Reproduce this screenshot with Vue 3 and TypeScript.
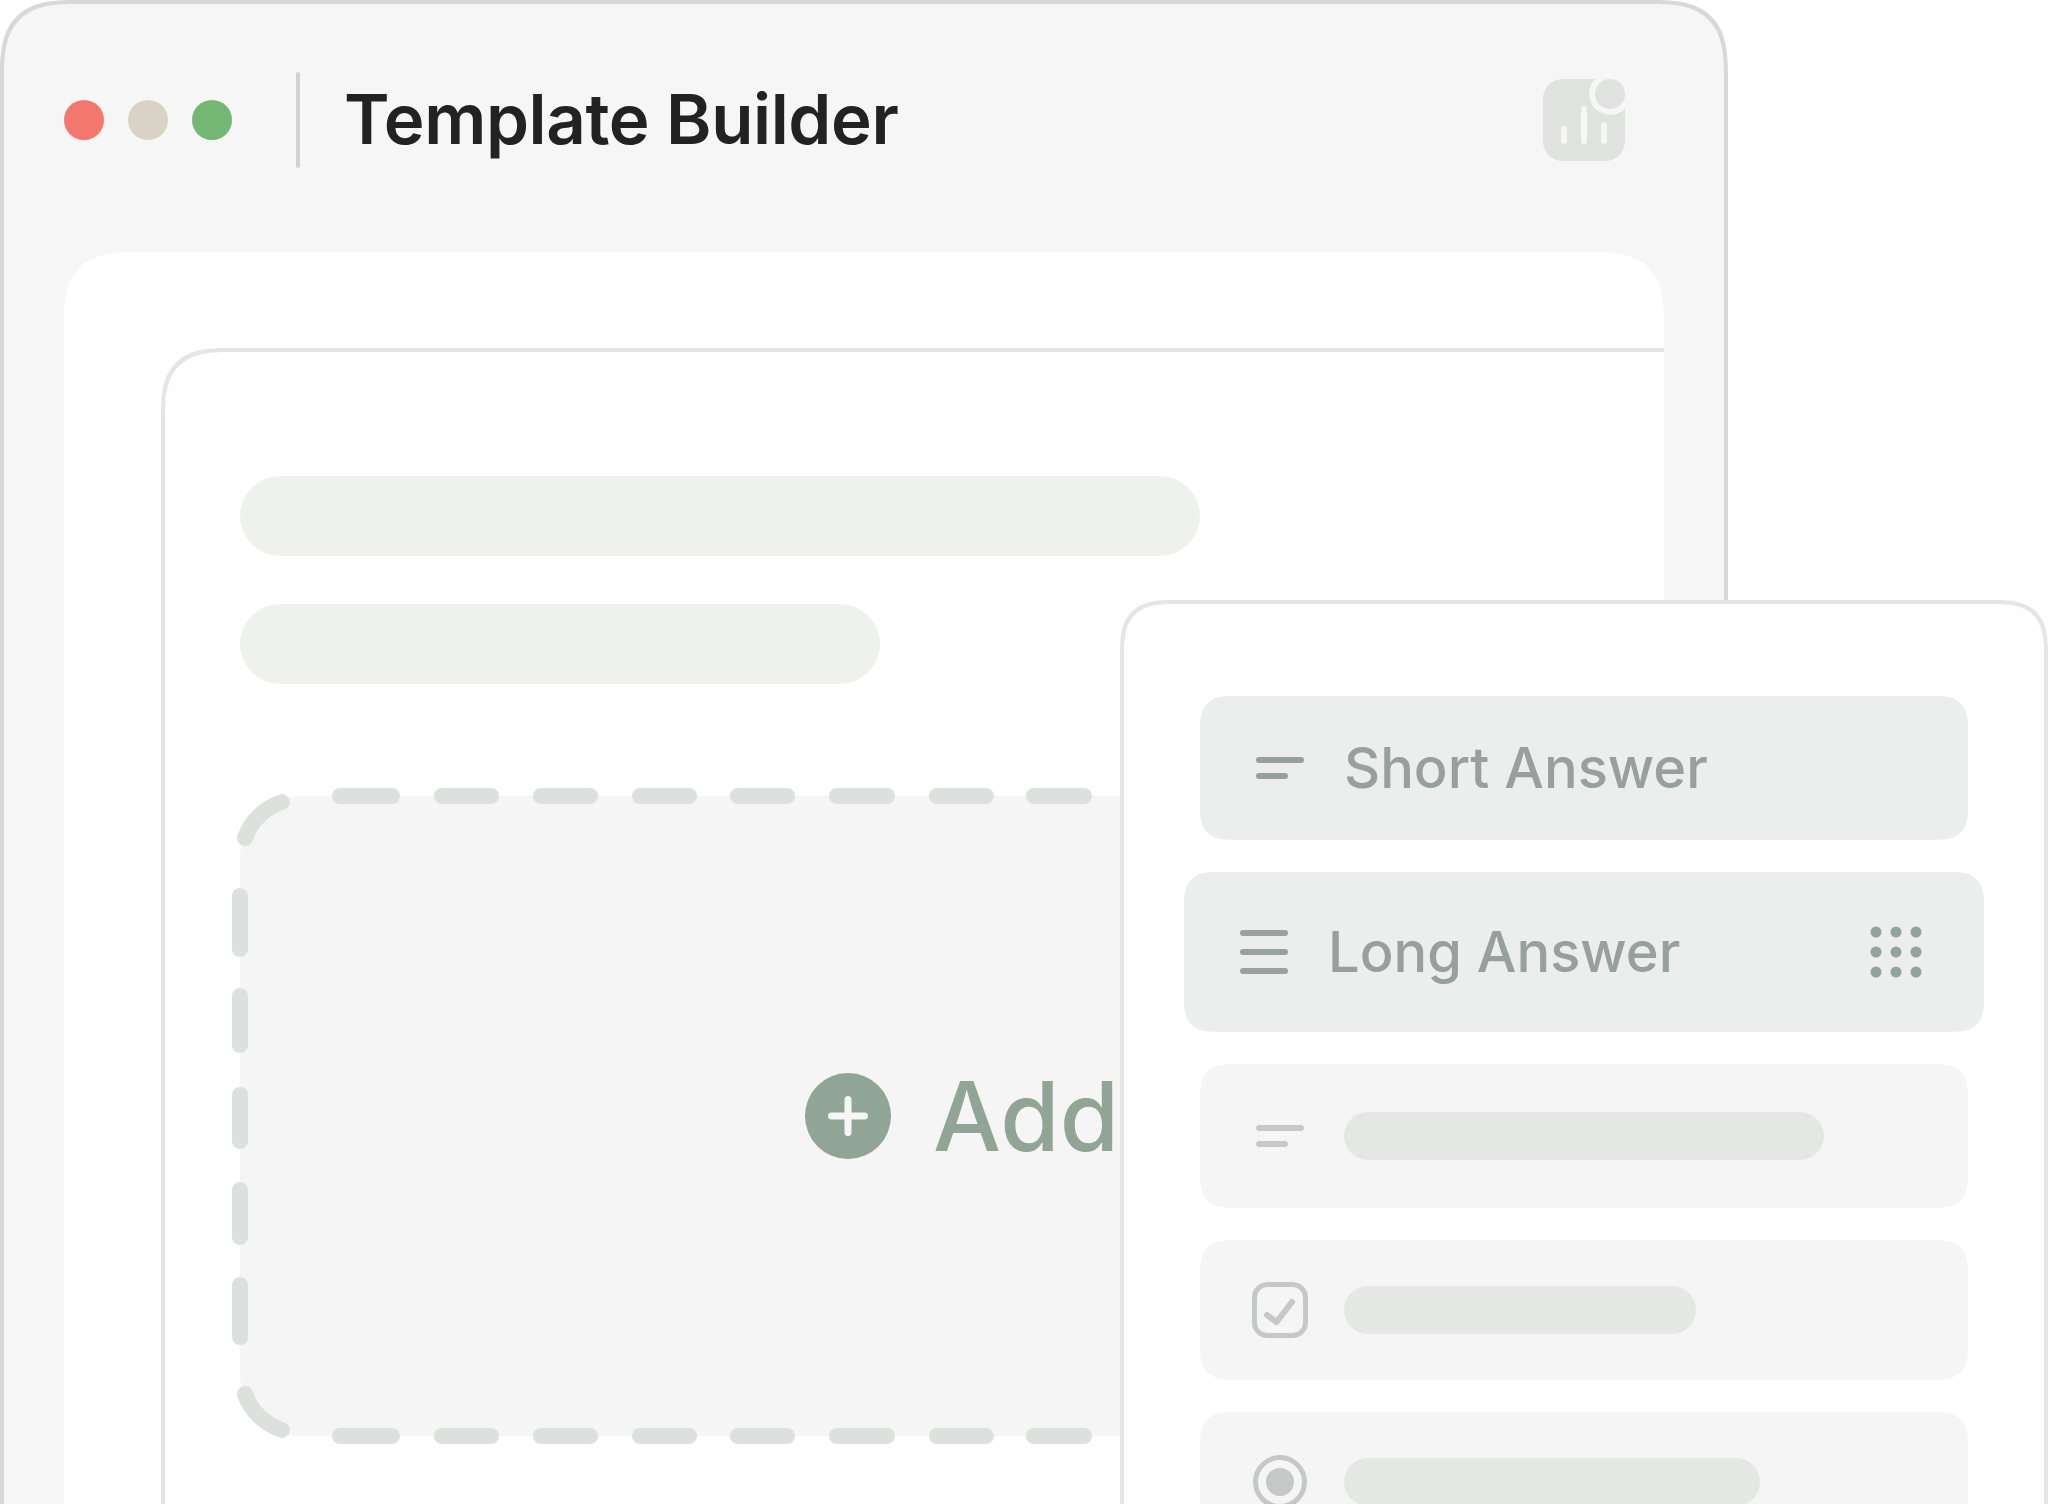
<script setup lang="ts">
const topDashes: [number, number][] = [[340,392],[442,491],[541,590],[640,689],[738,787],[837,887],[937,986],[1034,1084]]
const leftDashes: [number, number][] = [[896,949],[996,1045],[1095,1141],[1190,1237],[1285,1337]]
const ox = 240
const oy = 796
const h = 640
const dashPaths: string[] = [
  ...topDashes.map(([a, b]) => `M${a - ox} 0H${b - ox}`),
  ...topDashes.map(([a, b]) => `M${a - ox} ${h}H${b - ox}`),
  ...leftDashes.map(([a, b]) => `M0 ${a - oy}V${b - oy}`),
  'M5 42A58 58 0 0 1 42 6',
  `M5 ${h - 42}A58 58 0 0 0 42 ${h - 6}`,
]
const dots = [0, 1, 2].flatMap((r) => [0, 1, 2].map((c) => ({ cx: 6 + c * 20, cy: 6 + r * 20 })))
</script>

<template>
  <div class="stage">
    <section class="window">
      <header class="titlebar">
        <div class="lights">
          <span class="light red"></span>
          <span class="light sand"></span>
          <span class="light green"></span>
        </div>
        <span class="divider"></span>
        <h1 class="title">Template Builder</h1>
        <svg class="stats" width="82" height="82" viewBox="0 0 82 82">
          <path d="M20 0H52.3A21 21 0 0 0 82 29.7V62A20 20 0 0 1 62 82H20A20 20 0 0 1 0 62V20A20 20 0 0 1 20 0Z" fill="#e0e2df" />
          <circle cx="67" cy="15" r="15" fill="#e0e2df" />
          <rect x="18" y="47" width="6" height="18" rx="3" fill="#f6f6f6" />
          <rect x="38" y="27" width="6" height="38" rx="3" fill="#f6f6f6" />
          <rect x="58" y="43" width="6" height="22" rx="3" fill="#f6f6f6" />
        </svg>
      </header>
      <div class="sheet">
        <div class="card">
          <div class="bar wide"></div>
          <div class="bar narrow"></div>
          <div class="drop">
            <svg class="dashes" width="1440" height="640" viewBox="0 0 1440 640" fill="none">
              <path v-for="d in dashPaths" :key="d" :d="d" stroke="#dde1dd" stroke-width="16" stroke-linecap="round" />
            </svg>
            <span class="plus">
              <svg width="40" height="40" viewBox="0 0 40 40"><path d="M3.5 20H36.5M20 3.5V36.5" stroke="#f6f6f6" stroke-width="7" stroke-linecap="round" /></svg>
            </span>
            <span class="add">Add</span>
          </div>
        </div>
      </div>
    </section>

    <aside class="palette">
      <div class="row strong">
        <svg class="ico" width="56" height="56" viewBox="0 0 56 56"><path d="M7 20H49M7 36H33" stroke="#97a09c" stroke-width="6" stroke-linecap="round" /></svg>
        <span class="label">Short Answer</span>
      </div>
      <div class="row strong active">
        <svg class="ico" width="56" height="56" viewBox="0 0 56 56"><path d="M7 9H49M7 28H49M7 47H49" stroke="#97a39b" stroke-width="6" stroke-linecap="round" /></svg>
        <span class="label">Long Answer</span>
        <svg class="grip" width="52" height="52" viewBox="0 0 52 52"><circle v-for="(d, i) in dots" :key="i" :cx="d.cx" :cy="d.cy" r="5.5" fill="#93a49a" /></svg>
      </div>
      <div class="row">
        <svg class="ico" width="56" height="56" viewBox="0 0 56 56"><path d="M7 20H49M7 36H33" stroke="#c6c8c7" stroke-width="6" stroke-linecap="round" /></svg>
        <span class="stub s1"></span>
      </div>
      <div class="row r4">
        <svg class="ico" width="56" height="56" viewBox="0 0 56 56" fill="none" stroke="#c6c8c7"><rect x="2.5" y="2.5" width="51" height="51" rx="13" stroke-width="5" /><path d="M15 33L24.5 40L40 20" stroke-width="6" stroke-linecap="round" stroke-linejoin="round" /></svg>
        <span class="stub s2"></span>
      </div>
      <div class="row r5">
        <svg class="ico" width="56" height="56" viewBox="0 0 56 56"><circle cx="28" cy="28" r="24.5" fill="none" stroke="#c6c8c7" stroke-width="5" /><circle cx="28" cy="28" r="14" fill="#c6c8c7" /></svg>
        <span class="stub s3"></span>
      </div>
    </aside>
  </div>
</template>

<style scoped>
.stage {
  position: relative;
  width: 2048px;
  height: 1504px;
  overflow: hidden;
  background: #fff;
  font-family: Inter, "Liberation Sans", sans-serif;
}
.window {
  box-sizing: border-box;
  width: 1728px;
  height: 1600px;
  background: #f6f6f6;
  border: 4px solid #d8d8d8;
  border-radius: 76px 76px 0 0;
  corner-shape: superellipse(1.5);
  padding: 0 60px 0 60px;
  display: flex;
  flex-direction: column;
}
.titlebar {
  height: 248px;
  flex: none;
  box-sizing: border-box;
  padding-top: 68px;
  display: flex;
  align-items: flex-start;
}
.lights {
  display: flex;
  gap: 24px;
  margin-top: 28px;
}
.light {
  width: 40px;
  height: 40px;
  border-radius: 50%;
}
.red { background: #f4776d; }
.sand { background: #d9d3c7; }
.green { background: #74b673; }
.divider {
  width: 4px;
  height: 96px;
  margin-left: 64px;
  background: #d2d2d2;
  border-radius: 2px;
}
.title {
  margin: -1px 0 0 44px;
  font-size: 69px;
  font-weight: 600;
  line-height: 96px;
  letter-spacing: -0.4px;
  color: #222;
}
.stats {
  margin-left: auto;
  margin-top: 7px;
  margin-right: 39px;
}
.sheet {
  flex: 1;
  background: #fff;
  border-radius: 72px 72px 0 0;
  corner-shape: superellipse(1.5);
  overflow: hidden;
  padding: 96px 0 0 97px;
}
.card {
  box-sizing: border-box;
  width: 1600px;
  height: 1300px;
  border: 4px solid #e3e7e2;
  border-radius: 68px 0 0 0;
  corner-shape: superellipse(1.5);
  padding: 124px 0 0 75px;
}
.bar {
  height: 80px;
  border-radius: 40px;
  background: #eff1ec;
}
.wide { width: 960px; }
.narrow { width: 640px; margin-top: 48px; }
.drop {
  position: relative;
  width: 1440px;
  height: 640px;
  margin-top: 112px;
  background: #f5f5f6;
  border-radius: 60px;
  display: flex;
  align-items: center;
  padding-left: 565px;
  box-sizing: border-box;
}
.dashes {
  position: absolute;
  left: 0;
  top: 0;
  overflow: visible;
}
.plus {
  width: 86px;
  height: 86px;
  border-radius: 50%;
  background: #90a595;
  display: flex;
  align-items: center;
  justify-content: center;
  flex: none;
}
.add {
  margin-left: 42px;
  font-size: 96px;
  font-weight: 500;
  line-height: 96px;
  color: #90a595;
}
.palette {
  position: absolute;
  left: 1120px;
  top: 600px;
  box-sizing: border-box;
  width: 928px;
  height: 1100px;
  background: #fff;
  border: 4px solid #e3e7e2;
  border-radius: 54px;
  corner-shape: superellipse(1.5);
  padding: 92px 76px 0 76px;
  display: flex;
  flex-direction: column;
}
.row {
  box-sizing: border-box;
  height: 144px;
  flex: none;
  border-radius: 34px;
  corner-shape: superellipse(1.5);
  background: #f5f5f6;
  display: flex;
  align-items: center;
  padding-left: 52px;
  margin-bottom: 32px;
}
.strong { background: #eceeed; }
.active {
  height: 160px;
  margin: 0 -16px 32px;
}
.r4 { height: 140px; }
.r5 { height: 140px; }
.ico { flex: none; }
.label {
  margin-left: 36px;
  font-size: 56px;
  font-weight: 500;
  line-height: 64px;
  color: #97a09c;
}
.grip { margin-left: auto; margin-right: 62px; }
.stub {
  margin-left: 36px;
  height: 48px;
  border-radius: 24px;
  background: #e4e7e4;
}
.s1 { width: 480px; }
.s2 { width: 352px; }
.s3 { width: 416px; }
</style>
